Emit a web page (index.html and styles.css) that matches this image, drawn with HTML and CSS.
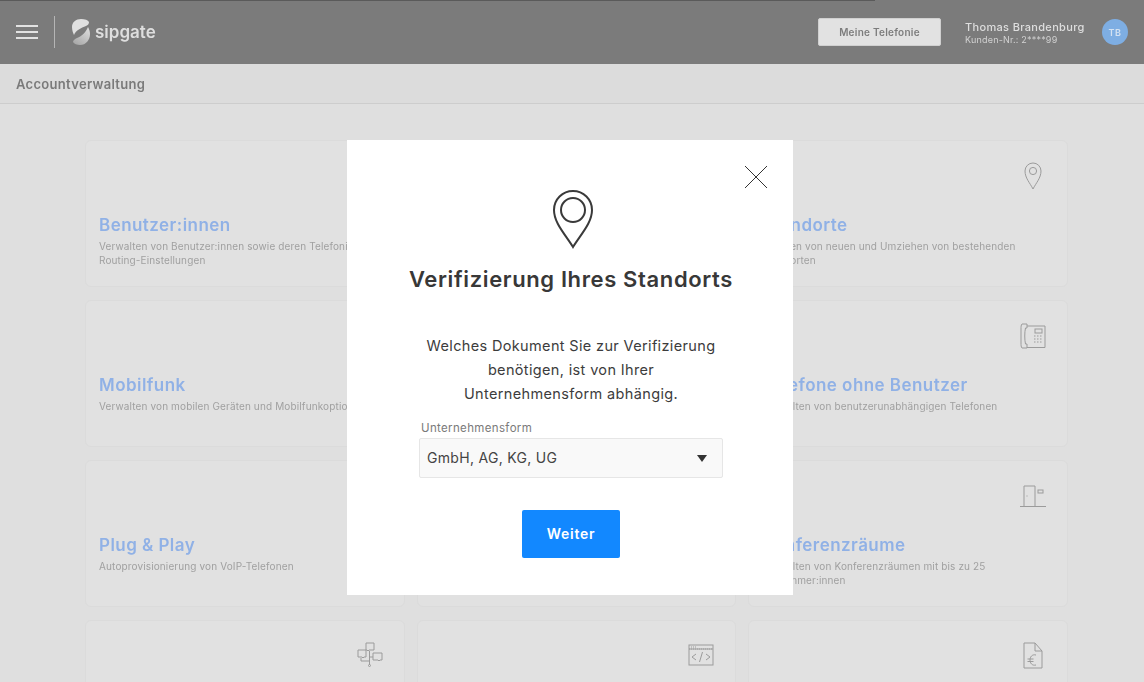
FILE: index.html
```html
<!DOCTYPE html>
<html lang="de"><head>
<meta charset="utf-8">
<title>sipgate - Accountverwaltung</title>
<link rel="stylesheet" href="styles.css">
</head>
<body>
<div class="page">
  <div class="progress"></div>
  <header class="topbar">
    <div class="burger"><span></span><span></span><span></span></div>
    <div class="divider"></div>
    <svg class="logo" width="20" height="28" viewBox="0 0 20 28">
      <defs><linearGradient id="lg" x1="0.9" y1="0" x2="0.2" y2="1"><stop offset="0" stop-color="#dedede"/><stop offset="1" stop-color="#a8a8a8"/></linearGradient></defs>
      <path fill="#e0e0e0" d="M1 9C1 4 5 1 10 1c4 0 7 1 8 3 0 2-1 3-3 4-5 2-10 4-12 9-1-2-2-5-2-8z"/>
      <path fill="url(#lg)" d="M17 9c1 2 2 4 2 7 0 6-4 11-10 11-3 0-6-1-7-3 0-2 2-3 4-4 5-2 9-6 11-11z"/>
    </svg>
    <span class="brand">sipgate</span>
    <button class="tel-btn">Meine Telefonie</button>
    <div class="user">
      <div class="user-name">Thomas Brandenburg</div>
      <div class="user-nr">Kunden-Nr.: 2****99</div>
    </div>
    <div class="avatar">TB</div>
  </header>
  <div class="subbar">Accountverwaltung</div>
  <main class="grid">
    <div class="card">
      <div class="card-icon"></div>
      <h3>Benutzer:innen</h3>
      <p>Verwalten von Benutzer:innen sowie deren Telefonie- und<br>Routing-Einstellungen</p>
    </div>
    <div class="card"><div class="card-icon"></div></div>
    <div class="card">
      <div class="card-icon">
        <svg width="18" height="30" viewBox="0 -2 18 30"><path d="M9 27C6 21 1 16 1 9a8 8 0 0 1 16 0c0 7-5 12-8 18z"/><circle cx="9" cy="9" r="3.6"/></svg>
      </div>
      <h3>Standorte</h3>
      <p>Anlegen von neuen und Umziehen von bestehenden Standorten</p>
    </div>
    <div class="card">
      <div class="card-icon"></div>
      <h3>Mobilfunk</h3>
      <p>Verwalten von mobilen Geräten und Mobilfunkoptionen</p>
    </div>
    <div class="card"><div class="card-icon"></div></div>
    <div class="card">
      <div class="card-icon">
        <svg width="26" height="29" viewBox="0 -3 26 29"><path d="M2 1h5v4H5.500C4.500 9 4.500 17 5.500 21H7v4H2C1 24 1 22 1 20V6c0-2 0-4 1-5z"/><path d="M7 3h18v21.500H7"/><rect x="15" y="6" width="7" height="4"/><path d="M14 13h8M14 16h8M14 19h8" stroke-dasharray="1.500 1.500"/></svg>
      </div>
      <h3>Telefone ohne Benutzer</h3>
      <p>Verwalten von benutzerunabhängigen Telefonen</p>
    </div>
    <div class="card">
      <div class="card-icon"></div>
      <h3>Plug &amp; Play</h3>
      <p>Autoprovisionierung von VoIP-Telefonen</p>
    </div>
    <div class="card"><div class="card-icon"></div></div>
    <div class="card">
      <div class="card-icon">
        <svg width="26" height="28" viewBox="0 -5 26 28"><path d="M0 21.500h26M4 21V1h11v20"/><rect x="18" y="5" width="5" height="3"/><path d="M6.500 11h1"/></svg>
      </div>
      <h3>Konferenzräume</h3>
      <p>Verwalten von Konferenzräumen mit bis zu 25 Teilnehmer:innen</p>
    </div>
    <div class="card">
      <div class="card-icon">
        <svg width="26" height="28" viewBox="0 -2 26 28"><path d="M9 1h8v7h-5l-1 1-1-1H9zM1 8h8v7H7l-1 1-1-1H1zM16 11h9v7h-2l-1 1-1-1h-5zM12.500 9v14M4 16v3h8.500M12.500 15H16"/><circle cx="12.500" cy="23.500" r="1"/></svg>
      </div>
    </div>
    <div class="card">
      <div class="card-icon">
        <svg width="26" height="26" viewBox="0 -4 26 26"><rect x="1" y="1" width="24" height="20"/><path d="M1 5h24M3 3h5" stroke-dasharray="1 1"/><path d="M1 5h24"/><path d="M8 10l-4 3 4 3M18 10l4 3-4 3M14.500 8l-3 10"/></svg>
      </div>
    </div>
    <div class="card">
      <div class="card-icon">
        <svg width="20" height="29" viewBox="0 -2 20 29"><path d="M1 1h11l7 8v17H1zM12 1v8h7"/><path d="M13 13c-4-1-6 2-6 5s2 6 6 5M4.500 17h6M4.500 19.500h6"/></svg>
      </div>
    </div>
  </main>
</div>

<div class="modal">
  <svg class="modal-close" width="24" height="24" viewBox="0 0 24 24"><path d="M1 1l22 22M23 1L1 23"/></svg>
  <svg class="modal-pin" width="42" height="60" viewBox="0 0 42 60"><path d="M21 58C13 45 2 34 2 21a19 19 0 0 1 38 0c0 13-11 24-19 37z"/><circle cx="21" cy="21" r="12"/></svg>
  <h2>Verifizierung Ihres Standorts</h2>
  <p class="modal-text">Welches Dokument Sie zur Verifizierung<br>benötigen, ist von Ihrer<br>Unternehmensform abhängig.</p>
  <div class="field">
    <label>Unternehmensform</label>
    <div class="select"><span>GmbH, AG, KG, UG</span><i class="caret"></i></div>
  </div>
  <button class="next">Weiter</button>
</div>
</body>
</html>
```

FILE: styles.css
```css
* { box-sizing: border-box; }
html, body { margin: 0; height: 100%; overflow: hidden; }
body { background: #dfdfdf; font-family: Inter, "Liberation Sans", sans-serif; color: #333; }

.page { height: 682px; overflow: hidden; filter: blur(0.5px); background: #dfdfdf; position: relative; }
.progress { position: absolute; top: 0; left: 0; width: 875px; height: 1px; background: #5a5a5a; }

.topbar { height: 64px; background: #7b7b7b; display: flex; align-items: center; padding: 0 16px; }
.burger { width: 22px; display: flex; flex-direction: column; gap: 4.5px; }
.burger span { height: 1.500px; background: #e2e2e2; }
.divider { width: 1px; height: 32px; background: #b5b5b5; margin: 0 16px; }
.logo { margin-right: 4px; }
.brand { font-size: 17px; font-weight: 600; color: #dedede; }
.tel-btn { margin-left: auto; width: 123px; height: 28px; padding-bottom: 2px; border: 1px solid #d0d0d0; border-radius: 2px; background: #e2e2e2; color: #7c7c7c; font: 600 10px Inter, sans-serif; letter-spacing: 0.25px; }
.user { margin-left: 24px; width: 137px; padding-top: 2px; color: #dedede; }
.user-name { font-size: 11px; font-weight: 500; letter-spacing: 0.33px; line-height: 14px; }
.user-nr { font-size: 9px; letter-spacing: 0.2px; line-height: 12px; color: #d2d2d2; }
.avatar { width: 26px; height: 26px; border-radius: 50%; background: #7eaee3; color: #d4e2f2; font-size: 9px; font-weight: 600; letter-spacing: 0.5px; display: flex; align-items: center; justify-content: center; }

.subbar { height: 40px; background: #dcdcdc; border-bottom: 1px solid #cdcdcd; padding: 1px 16px 0; line-height: 39px; font-size: 13px; font-weight: 600; color: #7a7a7a; letter-spacing: 0.3px; }

.grid { display: grid; grid-template-columns: repeat(3, 319.670px); column-gap: 12px; row-gap: 13px; padding: 36px 0 0 85px; }
.card { height: 147px; background: #e1e1e1; border: 1px solid #dbdbdb; border-radius: 6px; padding: 19px 13px 0; }
.card-icon { height: 54px; width: 26px; margin-left: auto; margin-right: 8px; display: flex; justify-content: center; align-items: flex-start; }
.card-icon svg { flex: none; fill: none; stroke: #9b9b9b; stroke-width: 1; }
.card h3 { margin: 0 0 3px; font-size: 17px; line-height: 22px; font-weight: 600; color: #90b1e6; letter-spacing: 0.45px; }
.card p { margin: 0; font-size: 10px; line-height: 14px; color: #a0a0a0; letter-spacing: 0.13px; }

.modal { position: absolute; left: 347px; top: 140px; width: 446px; height: 455px; background: #fff; display: flex; flex-direction: column; align-items: center; padding: 49px 0 0 2px; }
.modal-close { position: absolute; left: 397px; top: 25px; fill: none; stroke: #333; stroke-width: 1; }
.modal-pin { fill: none; stroke: #3a3a3a; stroke-width: 2; margin: 0 0 15px 4px; }
.modal h2 { margin: 0; font-size: 22px; line-height: 31px; font-weight: 600; color: #383838; letter-spacing: 0.63px; }
.modal-text { margin: 39px 0 0; text-align: center; font-size: 14.500px; line-height: 24px; color: #3c3c3c; letter-spacing: 0.35px; }
.field { width: 304px; margin-top: 14px; }
.field label { display: block; padding-left: 2px; font-size: 11.500px; line-height: 17px; color: #7a7a7a; letter-spacing: 0.35px; }
.select { height: 40px; margin-top: 1px; padding: 0 15px 2px 7px; background: #f9f9f9; border: 1px solid #e6e6e6; border-radius: 2px; display: flex; align-items: center; justify-content: space-between; font-size: 14px; color: #444; letter-spacing: 0.3px; }
.caret { width: 0; height: 0; margin-top: 2px; border-left: 5px solid transparent; border-right: 5px solid transparent; border-top: 7px solid #333; }
.next { margin-top: 32px; width: 98px; height: 48px; padding-bottom: 2px; border: 0; border-radius: 2px; background: #1288ff; color: #fff; font: 600 14px Inter, sans-serif; letter-spacing: 0.7px; }
```
